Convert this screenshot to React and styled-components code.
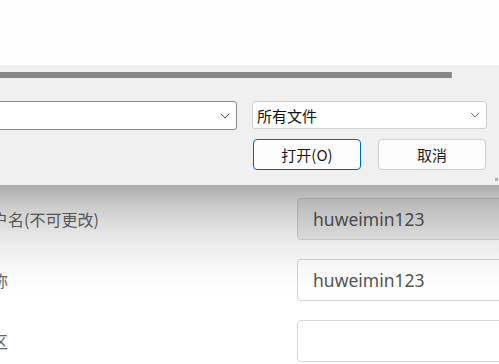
import React from "react";
import styled, { createGlobalStyle } from "styled-components";

const GlobalStyle = createGlobalStyle`
  html, body {
    margin: 0;
    padding: 0;
    background: #ffffff;
    overflow: hidden;
  }
  body {
    width: 499px;
    height: 364px;
  }
`;

const Page = styled.div`
  width: 499px;
  height: 364px;
  display: flex;
  flex-direction: column;
  overflow: hidden;
  font-family: "Noto Sans CJK SC", "Noto Sans", sans-serif;
`;

const TopBlank = styled.div`
  height: 65px;
  flex: 0 0 65px;
  background: #fefefe;
`;

const Dialog = styled.div`
  flex: 0 0 120px;
  height: 120px;
  background: #f0f0f0;
  display: flex;
  flex-direction: column;
  position: relative;
`;

const ScrollTrack = styled.div`
  margin-top: 7px;
  width: 452px;
  height: 6px;
  background: #868686;
  border-right: 1px solid #9a9a9a;
  box-sizing: border-box;
`;

const ComboRow = styled.div`
  margin-top: 23px;
  display: flex;
  gap: 15px;
  align-items: flex-start;
`;

const Combo = styled.div`
  box-sizing: border-box;
  width: ${(p) => p.$width}px;
  height: ${(p) => p.$height}px;
  margin-left: ${(p) => p.$offset || 0}px;
  background: #ffffff;
  border: 1px solid ${(p) => (p.$dark ? "#8a8a8a" : "#cfcfcf")};
  border-radius: 3px;
  display: flex;
  align-items: center;
  justify-content: space-between;
  padding: 0 6px 0 4px;
  font-size: 15px;
  color: #111;
`;

const Chevron = ({ color }) => (
  <svg width="10" height="6" viewBox="0 0 10 6">
    <path d="M0.8 0.8 L5 5 L9.2 0.8" fill="none" stroke={color} strokeWidth="1" />
  </svg>
);

const ButtonRow = styled.div`
  margin-top: 9px;
  padding-right: 13px;
  display: flex;
  justify-content: flex-end;
  gap: 17px;
`;

const DialogButton = styled.button`
  box-sizing: border-box;
  width: 108px;
  height: 31px;
  background: #fdfdfd;
  border: 1px solid ${(p) => (p.$primary ? "#0067c0" : "#d0d0d0")};
  border-radius: 4px;
  font-family: "Noto Sans CJK SC", "Noto Sans", sans-serif;
  font-size: 15px;
  color: #1a1a1a;
  display: flex;
  align-items: center;
  justify-content: center;
  padding: 0;
`;

const Grip = styled.div`
  position: absolute;
  right: 1px;
  bottom: 4px;
  width: 3px;
  height: 3px;
  background: #b0b0b0;
`;

const FormArea = styled.div`
  flex: 1;
  position: relative;
  background: #ffffff;
  padding-top: 13px;
  display: flex;
  flex-direction: column;
  gap: 19px;
`;

const Shadow = styled.div`
  position: absolute;
  left: 0;
  right: 0;
  top: 0;
  height: 108px;
  pointer-events: none;
  background: linear-gradient(
    to bottom,
    rgba(0, 0, 0, 0.33) 0%,
    rgba(0, 0, 0, 0.2) 20%,
    rgba(0, 0, 0, 0.1) 45%,
    rgba(0, 0, 0, 0.03) 75%,
    rgba(0, 0, 0, 0) 100%
  );
`;

const Row = styled.div`
  display: grid;
  grid-template-columns: 297px 240px;
  align-items: center;
  height: 42px;
`;

const Label = styled.div`
  margin-left: -24px;
  font-size: 16px;
  color: #666;
  white-space: nowrap;
`;

const Field = styled.div`
  box-sizing: border-box;
  height: 42px;
  border: 1px solid #d6d6d6;
  border-radius: 4px;
  background: ${(p) => (p.$disabled ? "#eeeeee" : "#ffffff")};
  padding-left: 15px;
  display: flex;
  align-items: center;
  font-family: "Noto Sans", "Open Sans", sans-serif;
  font-size: 17.5px;
  color: #555;
`;

const fields = [
  { label: "用户名(不可更改)", value: "huweimin123", disabled: true },
  { label: "昵称", value: "huweimin123" },
  { label: "地区", value: "" },
];

export default function App() {
  return (
    <Page>
      <GlobalStyle />
      <TopBlank />
      <Dialog>
        <ScrollTrack />
        <ComboRow>
          <Combo $width={241} $height={29} $offset={-4} $dark>
            <span />
            <Chevron color="#555" />
          </Combo>
          <Combo $width={235} $height={28}>
            <span>所有文件</span>
            <Chevron color="#777" />
          </Combo>
        </ComboRow>
        <ButtonRow>
          <DialogButton $primary>打开(O)</DialogButton>
          <DialogButton>取消</DialogButton>
        </ButtonRow>
        <Grip />
      </Dialog>
      <FormArea>
        {fields.map((f) => (
          <Row key={f.label}>
            <Label>{f.label}</Label>
            <Field $disabled={f.disabled}>{f.value}</Field>
          </Row>
        ))}
        <Shadow />
      </FormArea>
    </Page>
  );
}
